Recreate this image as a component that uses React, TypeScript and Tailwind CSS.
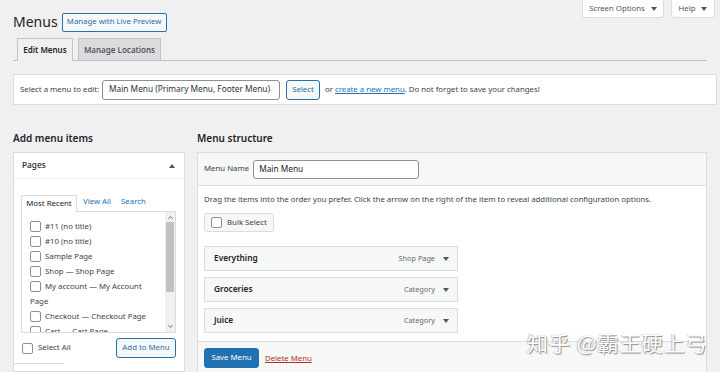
import { ChevronDown, ChevronUp } from 'lucide-react';

const pages = [
    '#11 (no title)',
    '#10 (no title)',
    'Sample Page',
    'Shop — Shop Page',
    'My account — My Account',
    'Checkout — Checkout Page',
    'Cart — Cart Page',
];

const items = [
    { name: 'Everything', type: 'Shop Page' },
    { name: 'Groceries', type: 'Category' },
    { name: 'Juice', type: 'Category' },
];

function Box() {
    return <span className="inline-block align-middle w-[11px] h-[11px] shrink-0 rounded-[2px] border border-[#8c8f94] bg-white" />;
}

function Caret() {
    return <span className="inline-block w-0 h-0 border-l-[3px] border-r-[3px] border-t-[4px] border-l-transparent border-r-transparent border-t-[#50575e]" />;
}

export default function App() {
    return (
        <div
            className="relative w-[720px] h-[372px] overflow-hidden bg-[#f0f0f1] text-[#1d2327] text-[8px]"
            style={{ fontFamily: '"Noto Sans", "Open Sans", sans-serif' }}
        >
            {/* Header */}
            <div className="flex justify-between items-start">
                <div className="flex items-center gap-[4px] pl-[13px] pt-[11px]">
                    <h1 className="text-[14px] leading-[22px] font-normal text-[#1d2327]">Menus</h1>
                    <button className="h-[19px] w-[105px] rounded-[2px] border border-[#2271b1] bg-[#f6f7f7] text-[#2271b1] text-[7.8px] leading-none">
                        Manage with Live Preview
                    </button>
                </div>
                <div className="flex gap-[7px] pr-[5px]">
                    <button className="h-[18px] w-[82px] flex items-center justify-center gap-[6px] bg-white border border-t-0 border-[#dcdcde] rounded-b-[3px] text-[#50575e] text-[7.8px]">
                        Screen Options <Caret />
                    </button>
                    <button className="h-[18px] w-[44px] flex items-center justify-center gap-[6px] bg-white border border-t-0 border-[#dcdcde] rounded-b-[3px] text-[#50575e] text-[7.8px]">
                        Help <Caret />
                    </button>
                </div>
            </div>

            {/* Tabs */}
            <div className="mx-[13px] mt-[5px] flex items-end gap-[5px] pl-[4px] border-b border-[#c3c4c7]">
                <div className="h-[23px] w-[56px] justify-center flex items-center border border-b-0 border-[#c3c4c7] bg-[#f0f0f1] -mb-px pb-px font-semibold text-[8px]">
                    Edit Menus
                </div>
                <div className="h-[22px] w-[83px] justify-center flex items-center border border-b-0 border-[#c3c4c7] bg-[#dcdcde] text-[#50575e] font-semibold text-[8px]">
                    Manage Locations
                </div>
            </div>

            {/* Select menu bar */}
            <div className="mx-[13px] mt-[13px] w-[704px] h-[31px] bg-white border border-[#dcdcde] flex items-center pl-[6px] gap-[5px] text-[7.8px] text-[#3c434a] whitespace-nowrap">
                <span className="w-[77px]">Select a menu to edit:</span>
                <div className="h-[20px] w-[178px] border border-[#8c8f94] rounded-[3px] flex items-center justify-between px-[6px] text-[#2c3338] text-[8.3px]">
                    <span>Main Menu (Primary Menu, Footer Menu)</span>
                    <ChevronDown className="w-[8px] h-[8px]" strokeWidth={2} />
                </div>
                <button className="h-[20px] w-[34px] ml-[1px] border border-[#2271b1] rounded-[3px] bg-[#f6f7f7] text-[#2271b1] text-[7.8px]">
                    Select
                </button>
                <span>
                    or <span className="text-[#2271b1] underline">create a new menu</span>. Do not forget to save your changes!
                </span>
            </div>

            {/* Columns */}
            <div className="flex gap-[12px] px-[13px] mt-[25px]">
                {/* Left column */}
                <div className="w-[172px] shrink-0">
                    <h2 className="text-[10px] font-semibold leading-[16px] mb-[6px]">Add menu items</h2>
                    <div className="bg-white border border-[#dcdcde]">
                        <div className="h-[26px] flex items-center justify-between pl-[8px] pr-[9px] border-b border-[#f0f0f1] text-[8.3px] font-medium">
                            <span>Pages</span>
                            <span className="inline-block w-0 h-0 border-l-[3px] border-r-[3px] border-b-[4px] border-l-transparent border-r-transparent border-b-[#50575e]" />
                        </div>
                        <div className="px-[7px] pt-[16px]">
                            <div className="flex items-end text-[7.8px]">
                                <div className="h-[17px] w-[56px] justify-center flex items-center border border-b-0 border-[#dcdcde] bg-white -mb-px relative z-10">
                                    Most Recent
                                </div>
                                <span className="pl-[6px] pr-[10px] pb-[3px] text-[#2271b1]">View All</span>
                                <span className="pb-[3px] text-[#2271b1]">Search</span>
                            </div>
                            <div className="h-[122px] w-[155px] border border-[#dcdcde] flex overflow-hidden">
                                <div className="flex-1 pl-[8px] pt-[7px] pr-[2px] text-[7.8px] text-[#3c434a] leading-[15px] whitespace-nowrap">
                                    {pages.map((label) => (
                                        <div key={label}>
                                            <Box /> <span className="ml-[2px]">{label}</span>
                                            {label === 'My account — My Account' && <div>Page</div>}
                                        </div>
                                    ))}
                                </div>
                                <div className="w-[10px] flex flex-col items-center bg-[#f1f1f1]">
                                    <ChevronUp className="w-[7px] h-[7px] text-[#505050] mt-[2px]" strokeWidth={3} />
                                    <div className="w-[8px] h-[70px] bg-[#c1c1c1] mt-[1px]" />
                                    <div className="flex-1" />
                                    <ChevronDown className="w-[7px] h-[7px] text-[#505050] mb-[2px]" strokeWidth={3} />
                                </div>
                            </div>
                            <div className="flex items-center justify-between py-[5px] pl-[1px] pr-[1px]">
                                <label className="flex items-center gap-[5px] text-[7.8px] text-[#3c434a]">
                                    <Box /> Select All
                                </label>
                                <button className="h-[20px] w-[60px] border border-[#2271b1] rounded-[3px] bg-[#f6f7f7] text-[#2271b1] text-[7.8px]">
                                    Add to Menu
                                </button>
                            </div>
                        </div>
                        <div className="h-[8px] border-t border-[#dcdcde] w-[50px]" />
                    </div>
                </div>

                {/* Right column */}
                <div className="flex-1">
                    <h2 className="text-[10px] font-semibold leading-[16px] mb-[6px]">Menu structure</h2>
                    <div className="bg-white border border-[#dcdcde]">
                        <div className="h-[33px] bg-[#f6f7f7] border-b border-[#dcdcde] flex items-center gap-[4px] pl-[6px]">
                            <span className="text-[7.8px] text-[#3c434a]">Menu Name</span>
                            <div className="h-[19px] w-[166px] border border-[#8c8f94] rounded-[3px] bg-white flex items-center px-[5px] text-[8.3px]">
                                Main Menu
                            </div>
                        </div>
                        <div className="px-[6px] pt-[7px]">
                            <p className="text-[7.8px] text-[#3c434a] leading-[12px]">
                                Drag the items into the order you prefer. Click the arrow on the right of the item to reveal additional configuration options.
                            </p>
                            <button className="mt-[8px] h-[19px] px-[6px] flex items-center gap-[5px] bg-[#f6f7f7] border border-[#dcdcde] rounded-[3px] text-[7.8px] text-[#3c434a]">
                                <Box /> Bulk Select
                            </button>
                            <div className="mt-[14px] w-[254px] flex flex-col gap-[6px] pb-[8px]">
                                {items.map((it) => (
                                    <div key={it.name} className="h-[25px] bg-[#f6f7f7] border border-[#dcdcde] flex items-center justify-between pl-[9px] pr-[8px]">
                                        <span className="text-[8.3px] font-semibold text-[#1d2327]">{it.name}</span>
                                        <span className="flex items-center gap-[8px] text-[7.3px] text-[#646970]">
                                            {it.type} <Caret />
                                        </span>
                                    </div>
                                ))}
                            </div>
                        </div>
                        <div className="h-[40px] bg-[#f6f7f7] border-t border-[#dcdcde] flex items-start pt-[6px] pl-[6px] gap-[6px]">
                            <button className="h-[20px] w-[55px] bg-[#2271b1] border border-[#2271b1] rounded-[3px] text-white text-[7.8px]">
                                Save Menu
                            </button>
                            <span className="text-[#b32d2e] underline text-[7.8px] leading-[20px]">Delete Menu</span>
                        </div>
                    </div>
                </div>
            </div>

            {/* Watermark */}
            <div
                className="absolute left-[527px] top-[329px] text-[21px] leading-[26px] text-white tracking-[1px]"
                style={{ fontFamily: '"Noto Sans CJK SC", sans-serif', textShadow: '1px 1px 1px #8a8a8a, -1px 0 1px #bbbbbb' }}
            >
                知乎 @霸王硬上弓
            </div>
        </div>
    );
}
